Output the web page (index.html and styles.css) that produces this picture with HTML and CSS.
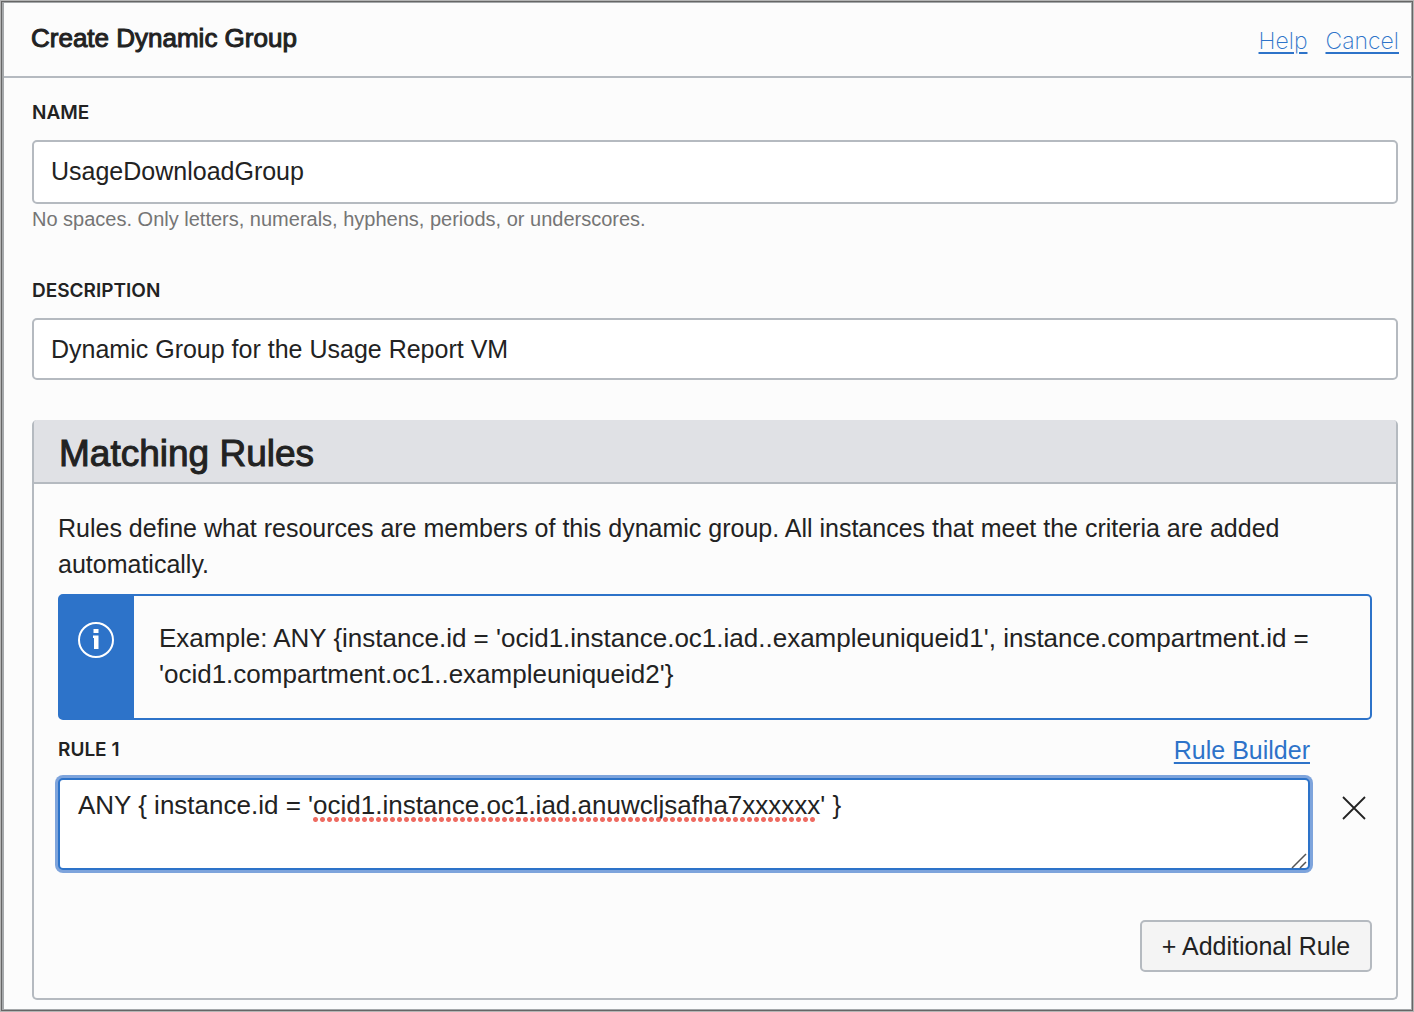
FILE: index.html
```html
<!DOCTYPE html>
<html lang="en">
<head>
<meta charset="utf-8">
<meta name="viewport" content="width=device-width, initial-scale=1">
<title>Create Dynamic Group</title>
<link rel="stylesheet" href="styles.css">
</head>
<body>
<main class="dialog">
  <header class="dialog-header">
    <h1 class="dialog-title">Create Dynamic Group</h1>
    <nav class="dialog-links">
      <a href="#help">Help</a>
      <a href="#cancel">Cancel</a>
    </nav>
  </header>
  <form class="dialog-body">
    <div class="field">
      <label class="label" for="name">NAME</label>
      <input class="input input-name" id="name" type="text" value="UsageDownloadGroup" aria-describedby="name-hint">
      <p class="hint" id="name-hint">No spaces. Only letters, numerals, hyphens, periods, or underscores.</p>
    </div>
    <div class="field">
      <label class="label" for="description">DESCRIPTION</label>
      <input class="input" id="description" type="text" value="Dynamic Group for the Usage Report VM">
    </div>
    <section class="panel">
      <h2 class="panel-title">Matching Rules</h2>
      <div class="panel-body">
        <p class="text">Rules define what resources are members of this dynamic group. All instances that meet the criteria are added automatically.</p>
        <div class="info">
          <div class="info-side">
            <svg class="info-icon" viewBox="0 0 36 36" aria-hidden="true">
              <circle cx="18" cy="18" r="17" fill="none" stroke="#fff" stroke-width="2"/>
              <path d="M15.500 7h5v4h-5zM15 13.500h5.500V27h-4.500V16h-1z" fill="#fff"/>
            </svg>
          </div>
          <p class="info-text">Example: ANY {instance.id = 'ocid1.instance.oc1.iad..exampleuniqueid1', instance.compartment.id = 'ocid1.compartment.oc1..exampleuniqueid2'}</p>
        </div>
        <div class="rule">
          <div class="rule-head">
            <label class="label" for="rule1">RULE 1</label>
            <a class="link" href="#builder">Rule Builder</a>
          </div>
          <div class="rule-box">
            <textarea class="rule-input" id="rule1" spellcheck="false">ANY { instance.id = 'ocid1.instance.oc1.iad.anuwcljsafha7xxxxxx' }</textarea>
            <span class="spelling-mark"></span>
            <svg class="grip" viewBox="0 0 16 16" aria-hidden="true">
              <path d="M1 15L15 1M9 15L15 9" fill="none" stroke="#555" stroke-width="1.500"/>
            </svg>
          </div>
          <button class="remove" type="button" aria-label="Remove rule">
            <svg class="remove-icon" viewBox="0 0 24 24" aria-hidden="true">
              <path d="M1 1L23 23M23 1L1 23" fill="none" stroke="#222" stroke-width="1.800"/>
            </svg>
          </button>
        </div>
        <div class="actions">
          <button class="add" type="button">+ Additional Rule</button>
        </div>
      </div>
    </section>
  </form>
</main>
</body>
</html>
```
FILE: styles.css
```css
* {
  box-sizing: border-box;
}

body {
  margin: 0;
  background: #fcfcfc;
  color: #222;
  font: 25px/36px "Liberation Sans", Arial, sans-serif;
}

h1, h2, p {
  margin: 0;
}

input, textarea, button {
  color: inherit;
  font: inherit;
}

.dialog {
  min-height: 100vh;
  padding: 1px 1px 1px 3px;
  border: 1px solid #b5b5b5;
  box-shadow: inset 0 0 0 1px #666, inset 0 0 0 2px #a5a8aa, inset 3px 0 0 #a5a8aa;
}

.dialog-header {
  display: flex;
  justify-content: space-between;
  align-items: center;
  height: 76px;
  padding: 0 13px 0 27px;
  border-bottom: 2px solid #b5bac0;
}

.dialog-title {
  padding-bottom: 3px;
  font-size: 26px;
  font-weight: normal;
  -webkit-text-stroke: 1px #222;
}

.dialog-links {
  display: flex;
  gap: 18px;
  padding-top: 3px;
  font-family: Inter, sans-serif;
  font-size: 23px;
  font-weight: 200;
}

.dialog-links a, .link {
  color: #2d73c9;
  text-decoration-thickness: 2px;
  text-underline-offset: 3px;
}

.dialog-body {
  padding: 23px 14px 10px 28px;
}

.field {
  display: flex;
  flex-direction: column;
}

.field .label {
  margin-bottom: 15px;
}

.field + .field {
  margin-top: 45px;
}

.label {
  font-size: 19px;
  line-height: 24px;
  font-family: Inter, sans-serif;
  font-weight: 600;
}

.input {
  width: 100%;
  height: 62px;
  padding: 0 17px;
  border: 2px solid #b5bac0;
  border-radius: 5px;
  background: #fff;
}

.input-name {
  height: 64px;
  padding-bottom: 2px;
}

.hint {
  color: #757575;
  font-size: 20px;
  line-height: 30px;
}

.panel {
  margin-top: 40px;
  border: 2px solid #b5bac0;
  border-top: 0;
  border-radius: 5px;
}

.panel-title {
  padding: 13px 25px 7px;
  border-bottom: 2px solid #b5bac0;
  border-radius: 3px 3px 0 0;
  background: #e0e1e5;
  font-size: 37px;
  font-weight: normal;
  line-height: 42px;
  -webkit-text-stroke: 1px #222;
}

.panel-body {
  padding: 26px 24px;
}

.info {
  display: flex;
  margin-top: 12px;
  border: 2px solid #2d73c9;
  border-radius: 5px;
}

.info-side {
  flex: none;
  width: 74px;
  padding: 26px 18px;
  background: #2d73c9;
}

.info-icon {
  display: block;
  width: 36px;
  height: 36px;
}

.info-text {
  padding: 24px 25px 26px;
  font-size: 26px;
}

.rule {
  display: grid;
  grid-template-columns: 1fr 24px;
  column-gap: 32px;
  margin: 12px 6px 0 0;
}

.rule-head {
  display: flex;
  justify-content: space-between;
  align-items: center;
  grid-column: 1;
}

.rule-box {
  position: relative;
  grid-column: 1;
  margin-top: 10px;
}

.rule-input {
  display: block;
  width: 100%;
  height: 92px;
  padding: 7px 18px;
  border: 2px solid #2d73c9;
  border-radius: 5px;
  outline: 0;
  background: #fff;
  box-shadow: 0 0 0 3px #7ea4dc;
  font-size: 26px;
  resize: none;
}

.spelling-mark {
  position: absolute;
  top: 39px;
  left: 254px;
  width: 504px;
  height: 5px;
  background: radial-gradient(circle, #ee6a60 2px, transparent 3px) 0 0 / 7px 5px;
  pointer-events: none;
}

.grip {
  position: absolute;
  right: 3px;
  bottom: 1px;
  width: 16px;
  height: 16px;
}

.remove {
  align-self: start;
  margin-top: 28px;
  padding: 0;
  border: 0;
  background: none;
}

.remove-icon {
  display: block;
  width: 24px;
  height: 24px;
}

.actions {
  display: flex;
  justify-content: flex-end;
  margin-top: 50px;
}

.add {
  min-width: 232px;
  height: 52px;
  padding: 0 16px;
  border: 2px solid #b5bac0;
  border-radius: 5px;
  background: #f4f4f4;
}
```
